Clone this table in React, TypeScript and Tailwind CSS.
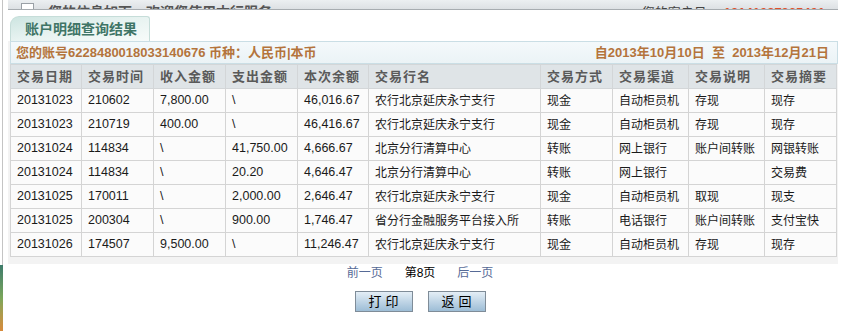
const cols = [71, 72, 72, 72, 71, 172, 72, 76, 76, 72];

const heads = ['交易日期', '交易时间', '收入金额', '支出金额', '本次余额', '交易行名', '交易方式', '交易渠道', '交易说明', '交易摘要'];

const rows = [
  ['20131023', '210602', '7,800.00', '\\', '46,016.67', '农行北京延庆永宁支行', '现金', '自动柜员机', '存现', '现存'],
  ['20131023', '210719', '400.00', '\\', '46,416.67', '农行北京延庆永宁支行', '现金', '自动柜员机', '存现', '现存'],
  ['20131024', '114834', '\\', '41,750.00', '4,666.67', '北京分行清算中心', '转账', '网上银行', '账户间转账', '网银转账'],
  ['20131024', '114834', '\\', '20.20', '4,646.47', '北京分行清算中心', '转账', '网上银行', '', '交易费'],
  ['20131025', '170011', '\\', '2,000.00', '2,646.47', '农行北京延庆永宁支行', '现金', '自动柜员机', '取现', '现支'],
  ['20131025', '200304', '\\', '900.00', '1,746.47', '省分行金融服务平台接入所', '转账', '电话银行', '账户间转账', '支付宝快'],
  ['20131026', '174507', '9,500.00', '\\', '11,246.47', '农行北京延庆永宁支行', '现金', '自动柜员机', '存现', '现存'],
];

export default function App() {
  return (
    <div className="flex w-[857px] h-[331px] overflow-hidden bg-white font-['Liberation_Sans','Noto_Sans_CJK_SC',sans-serif]">
      {/* left frame edge */}
      <div className="w-[8px] flex flex-col">
        <div className="flex-1 ml-[2px] border-l border-[#c4c4c4]" />
        <div className="h-[66px] w-[3px] bg-gradient-to-b from-[#3d7b6a] via-[#7aa65a] to-[#d88a3a]" />
      </div>

      <div className="w-[830px] flex flex-col">
        {/* top bar, scrolled mostly out of view */}
        <div className="h-[10px] overflow-hidden flex items-end justify-between bg-gradient-to-b from-[#eceff1] to-[#dde1e4] border-b border-[#a7acb0] px-[13px]">
          <div className="flex items-end gap-[14px] mb-[-7px]">
            <span className="w-[13px] h-[13px] bg-white border border-[#9aa0a6]" />
            <span className="text-[14px] leading-none font-bold text-[#555] mb-[-3px]">您的信息如下，欢迎您使用本行服务</span>
          </div>
          <div className="flex items-end gap-1 mb-[-10px] text-[13px] leading-none">
            <span className="text-[#444]">您的客户号：</span>
            <span className="text-[#e0502a] font-bold">13141087365401</span>
          </div>
        </div>

        {/* tab */}
        <div className="mt-[6px] ml-[2px] w-[140px] h-[25px] rounded-tl-[9px] rounded-tr-[3px] border border-b-0 border-[#c6ddd9] bg-gradient-to-br from-[#cde5e1] via-[#e8f3f1] to-[#f7fbfa] flex items-center pl-[14px] text-[14px] font-bold text-[#3f7566]">
          账户明细查询结果
        </div>

        {/* result box */}
        <div className="w-[830px] bg-[#f3f3f3] pl-[2px] pb-[7px]">
          <div className="h-[23px] border border-[#cadee5] bg-gradient-to-b from-[#f4f9fb] to-[#ebf3f6] flex items-center justify-between px-[5px] text-[13px] font-bold text-[#b4743c]">
            <span>您的账号6228480018033140676 币种：人民币|本币</span>
            <span className="pr-[3px]">自2013年10月10日&nbsp; 至&nbsp; 2013年12月21日</span>
          </div>
          <table className="border-collapse table-fixed w-[827px]">
            <colgroup>
              {cols.map((w, i) => (
                <col key={i} style={{ width: w }} />
              ))}
            </colgroup>
            <thead>
              <tr className="h-[24px] bg-[#dfe4e7]">
                {heads.map((h) => (
                  <th key={h} className="border border-[#d3d6d8] text-left font-bold text-[13px] text-[#5a5a5a] pl-[6px] tracking-[1px]">
                    {h}
                  </th>
                ))}
              </tr>
            </thead>
            <tbody>
              {rows.map((r, i) => (
                <tr key={i} className="h-[24px] bg-[#fbfbfb]">
                  {r.map((c, j) => (
                    <td key={j} className={`border border-[#d4d4d4] pl-[6px] whitespace-nowrap overflow-hidden text-[#1a1a1a] ${j < 5 ? 'text-[12.5px]' : 'text-[12px]'}`}>
                      {c}
                    </td>
                  ))}
                </tr>
              ))}
            </tbody>
          </table>
        </div>

        {/* pager */}
        <div className="mt-[1px] flex justify-center items-center gap-[22px] h-[16px] text-[12px] pr-[6px]">
          <span className="text-[#566a96]">前一页</span>
          <span className="text-black">第8页</span>
          <span className="text-[#566a96]">后一页</span>
        </div>

        <div className="mt-[10px] flex justify-center gap-[15px] pr-[6px]">
          <button className="w-[58px] h-[21px] border border-[#7f8c98] bg-gradient-to-b from-[#e4eef6] to-[#9dbdd6] text-[13px] text-black tracking-[4px] pl-[4px]">
            打印
          </button>
          <button className="w-[58px] h-[21px] border border-[#7f8c98] bg-gradient-to-b from-[#e4eef6] to-[#9dbdd6] text-[13px] text-black tracking-[4px] pl-[4px]">
            返回
          </button>
        </div>
      </div>
    </div>
  );
}
